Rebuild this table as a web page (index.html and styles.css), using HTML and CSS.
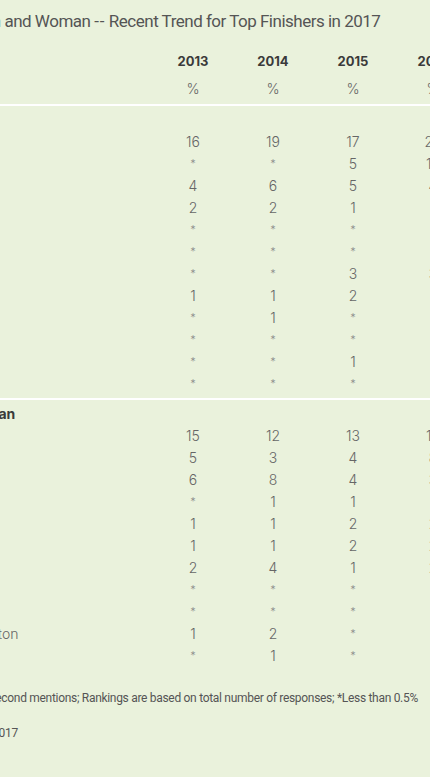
FILE: index.html
```html
<!DOCTYPE html>
<html lang="en">
<head>
<meta charset="utf-8">
<title>Most Admired Man and Woman</title>
<link rel="stylesheet" href="styles.css">
</head>
<body>
<div class="page">
  <h1 class="title">Most Admired Man and Woman <span class="dash">--</span> Recent Trend for Top Finishers in 2017</h1>
  <div class="table">
    <div class="thead">
      <div class="row yr"><span class="lbl"></span><span>2013</span><span>2014</span><span>2015</span><span>2016</span><span>2017</span></div>
      <div class="row pct"><span class="lbl"></span><span>%</span><span>%</span><span>%</span><span>%</span><span>%</span></div>
    </div>
    <div class="section">
      <div class="row grp"><span class="lbl">Most Admired Man</span></div>
      <div class="row"><span class="lbl">Barack Obama</span><span>16</span><span>19</span><span>17</span><span>22</span><span>17</span></div>
      <div class="row"><span class="lbl">Donald Trump</span><span class="st">*</span><span class="st">*</span><span>5</span><span>15</span><span>14</span></div>
      <div class="row"><span class="lbl">Pope Francis</span><span>4</span><span>6</span><span>5</span><span>4</span><span>3</span></div>
      <div class="row"><span class="lbl">Billy Graham</span><span>2</span><span>2</span><span>1</span><span>1</span><span>2</span></div>
      <div class="row"><span class="lbl">John McCain</span><span class="st">*</span><span class="st">*</span><span class="st">*</span><span class="st">*</span><span>2</span></div>
      <div class="row"><span class="lbl">Elon Musk</span><span class="st">*</span><span class="st">*</span><span class="st">*</span><span class="st">*</span><span>1</span></div>
      <div class="row"><span class="lbl">Bernie Sanders</span><span class="st">*</span><span class="st">*</span><span>3</span><span>3</span><span>1</span></div>
      <div class="row"><span class="lbl">Bill Gates</span><span>1</span><span>1</span><span>2</span><span>1</span><span>1</span></div>
      <div class="row"><span class="lbl">Dalai Lama</span><span class="st">*</span><span>1</span><span class="st">*</span><span class="st">*</span><span>1</span></div>
      <div class="row"><span class="lbl">Mike Pence</span><span class="st">*</span><span class="st">*</span><span class="st">*</span><span class="st">*</span><span>1</span></div>
      <div class="row"><span class="lbl">Netanyahu</span><span class="st">*</span><span class="st">*</span><span>1</span><span class="st">*</span><span>1</span></div>
      <div class="row"><span class="lbl">Jeff Bezos</span><span class="st">*</span><span class="st">*</span><span class="st">*</span><span class="st">*</span><span>1</span></div>
    </div>
    <div class="section">
      <div class="row grp"><span class="lbl">Most Admired Woman</span></div>
      <div class="row"><span class="lbl">Hillary Clinton</span><span>15</span><span>12</span><span>13</span><span>12</span><span>9</span></div>
      <div class="row"><span class="lbl">Michelle Obama</span><span>5</span><span>3</span><span>4</span><span>8</span><span>7</span></div>
      <div class="row"><span class="lbl">Oprah Winfrey</span><span>6</span><span>8</span><span>4</span><span>3</span><span>4</span></div>
      <div class="row"><span class="lbl">Elizabeth Warren</span><span class="st">*</span><span>1</span><span>1</span><span>1</span><span>3</span></div>
      <div class="row"><span class="lbl">Queen Elizabeth</span><span>1</span><span>1</span><span>2</span><span>2</span><span>2</span></div>
      <div class="row"><span class="lbl">Angela Merkel</span><span>1</span><span>1</span><span>2</span><span>2</span><span>2</span></div>
      <div class="row"><span class="lbl">Condoleezza Rice</span><span>2</span><span>4</span><span>1</span><span>2</span><span>1</span></div>
      <div class="row"><span class="lbl">Nikki Haley</span><span class="st">*</span><span class="st">*</span><span class="st">*</span><span class="st">*</span><span>1</span></div>
      <div class="row"><span class="lbl">Melania Trump</span><span class="st">*</span><span class="st">*</span><span class="st">*</span><span>1</span><span>1</span></div>
      <div class="row"><span class="lbl lbl-long">Duchess Kate Middleton</span><span>1</span><span>2</span><span class="st">*</span><span class="st">*</span><span>1</span></div>
      <div class="row"><span class="lbl">Malala</span><span class="st">*</span><span>1</span><span class="st">*</span><span class="st">*</span><span>1</span></div>
    </div>
  </div>
  <p class="note">Note: Based on combined first and second mentions; Rankings are based on total number of responses; *Less than 0.5%</p>
  <p class="source">Gallup, Dec 4-11, 2017</p>
</div>
</body>
</html>
```
FILE: styles.css
```css
html, body {
  margin: 0;
  padding: 0;
}
body {
  background: #eaf2dc;
  overflow: hidden;
  font-family: Inter, "Liberation Sans", sans-serif;
  color: #666;
}
.page {
  margin-left: -133px;
  width: 900px;
}
.title {
  margin: 0 0 0 -3px;
  padding-top: 9px;
  font-family: Roboto, "Liberation Sans", sans-serif;
  font-size: 17px;
  line-height: 24px;
  font-weight: 400;
  letter-spacing: -0.5px;
  color: #555;
  white-space: nowrap;
}
.title .dash {
  letter-spacing: 0.8px;
}
.table {
  margin-top: 15px;
}
.thead {
  padding-bottom: 2px;
}
.row {
  display: grid;
  grid-template-columns: 286px repeat(5, 80px);
  height: 22px;
  line-height: 22px;
  font-size: 14px;
  font-weight: 300;
  color: #666;
}
.row > span {
  text-align: center;
  white-space: nowrap;
}
.row > .lbl {
  text-align: left;
}
.row > .lbl-long {
  margin-left: -7px;
}
.row > .st {
  font-size: 11px;
  color: #888;
}
.yr {
  height: 27px;
  line-height: 27px;
  font-size: 13px;
  font-weight: 700;
  color: #3a3a3a;
}
.pct {
  height: 27px;
  line-height: 27px;
  font-size: 14px;
  color: #666;
}
.section {
  border-top: 2px solid #fff;
  padding-top: 3px;
}
.section + .section {
  margin-top: 3px;
}
.grp {
  font-weight: 700;
  color: #3a3a3a;
}
.grp > .lbl {
  margin-left: -3px;
}
.note {
  margin: 22px 0 0 -55px;
  font-family: Roboto, "Liberation Sans", sans-serif;
  font-size: 12px;
  letter-spacing: -0.3px;
  line-height: 18px;
  color: #555;
  white-space: nowrap;
}
.source {
  margin: 17px 0 0 38px;
  font-family: Roboto, "Liberation Sans", sans-serif;
  font-size: 12px;
  letter-spacing: -0.25px;
  line-height: 18px;
  color: #555;
  white-space: nowrap;
}
```
